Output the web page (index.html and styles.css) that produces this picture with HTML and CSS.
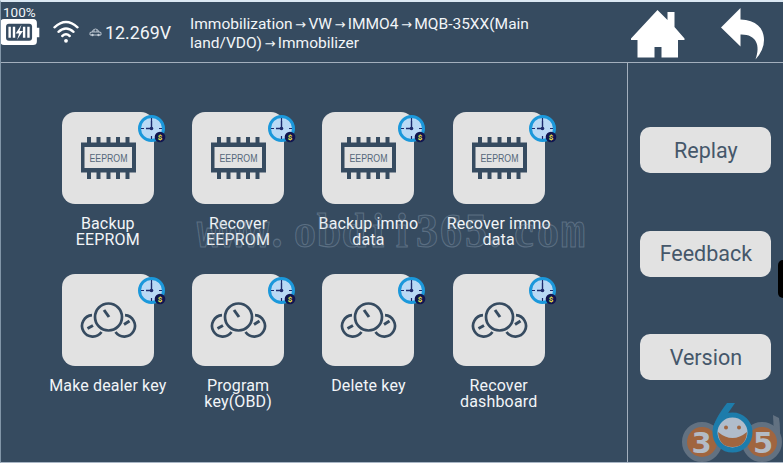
FILE: index.html
```
<!DOCTYPE html>
<html lang="en">
<head>
  <meta charset="UTF-8" />
  <meta name="viewport" content="width=device-width, initial-scale=1.0"/>
  <title>Immobilizer</title>
  <link rel="stylesheet" href="styles.css">
</head>
<body>
  <!-- shared icons -->
  <svg class="sprite" width="0" height="0">
    <symbol id="icon-eeprom" viewBox="0 0 92 92">
      <path d="M25 31v-6h4v6zM34.500 31v-6h4v6zM44.500 31v-6h4v6zM54 31v-6h4v6zM63.500 31v-6h4v6zM25 60v7h4v-7zM34.500 60v7h4v-7zM44.500 60v7h4v-7zM54 60v7h4v-7zM63.500 60v7h4v-7z" fill="#364b60"/>
      <path fill-rule="evenodd" d="M19 30.500h55v30h-55zM22.500 35v21h47.500v-21z" fill="#364b60"/>
      <text x="46.500" y="49.500" text-anchor="middle" textLength="38" lengthAdjust="spacingAndGlyphs" class="chip-text">EEPROM</text>
    </symbol>
    <symbol id="icon-gauge" viewBox="0 0 92 92">
      <g fill="none" stroke="#364b60" stroke-width="2.700">
        <circle cx="46.500" cy="43" r="13.500"/>
        <path d="M30 41.200A10.700 10.700 0 1 0 39.500 58M63 41.200A10.700 10.700 0 1 1 53.500 58"/>
        <path d="M42 36l5 7" stroke-width="3"/>
        <path d="M25.500 54.500l5.500-3M62 50.500l5.500-3.500" stroke-width="3"/>
      </g>
    </symbol>
    <symbol id="icon-clock" viewBox="0 0 28 28">
      <circle cx="13.500" cy="13.500" r="12" fill="#b9d9f5" stroke="#1b98db" stroke-width="3"/>
      <path d="M13.500 3v3M13.500 21v3M3 13.500h3M21 13.500h3" stroke="#1d2a6b" stroke-width="1.200"/>
      <path d="M13.500 6v7.500H8" fill="none" stroke="#1d2a6b" stroke-width="1.400"/>
      <circle cx="13.500" cy="13.500" r="1.800" fill="#1d2a6b"/>
      <circle cx="22" cy="22" r="5.300" fill="#10154f"/>
      <text x="22" y="25" text-anchor="middle" class="coin-text">$</text>
    </symbol>
  </svg>

  <div class="screen">
    <header class="topbar">
      <div class="battery">
        <span class="battery-level">100%</span>
        <svg width="39" height="27" viewBox="0 0 40 28">
          <path d="M3 0h30q4 0 4 4v5h2.500v10h-2.500v4q0 4-4 4h-30q-4 0-4-4v-19q0-4 4-4z" fill="#fff"/>
          <rect x="5" y="5" width="27" height="17.500" rx="3" fill="#364b60"/>
          <path d="M7.500 8h2.500v11.500h-2.500zM12 8h2.500v11.500h-2.500zM22.500 8h2.500v11.500h-2.500zM27 8h2.500v11.500h-2.500zM21 6l-6 9h3.500l-2 6.500 6-9h-3.500z" fill="#fff"/>
        </svg>
      </div>
      <svg class="wifi" width="26" height="24" viewBox="0 0 26 24">
        <g fill="none" stroke="#fff" stroke-width="2.400" stroke-linecap="round">
          <path d="M1.500 7.300Q13-3.300 24.500 7.300M5.500 11.800Q13 5 20.500 11.800M9.300 16Q13 12.700 16.700 16"/>
        </g>
        <circle cx="13" cy="20.800" r="1.900" fill="#fff"/>
      </svg>
      <svg class="car" width="13" height="9" viewBox="0 0 13 9">
        <path d="M1 7V4.500l2-.5Q4 1 6.500 1T10 4l2 .5V7z M3 4h7M5 2v2M8 2v2" fill="none" stroke="#c5ced8" stroke-width=".9"/>
        <circle cx="3.500" cy="7" r="1.200" fill="#c5ced8"/>
        <circle cx="9.500" cy="7" r="1.200" fill="#c5ced8"/>
      </svg>
      <span class="voltage">12.269V</span>
      <div class="path">Immobilization<i>→</i>VW<i>→</i>IMMO4<i>→</i>MQB-35XX(Main<br>land/VDO)<i>→</i>Immobilizer</div>
      <svg class="home" width="56" height="48" viewBox="0 0 56 48">
        <path d="M27.500 0l10 10V2h7v15L54.500 28.500v1.500h-6.500v17.500H31.500V37h-7v10.500H7.500V30H1v-1.500z" fill="#fff"/>
      </svg>
      <svg class="back" width="46" height="52" viewBox="0 0 46 52">
        <path d="M1 19.500L20.500 0v11.500C36 12 44 20 44 32q0 10-8.500 19.500C41 37 36 26 20.500 26.500V38.500z" fill="#fff"/>
      </svg>
    </header>

    <div class="content">
      <main class="grid">
        <div class="item">
          <div class="tile"><svg class="icon"><use href="#icon-eeprom"/></svg><svg class="badge"><use href="#icon-clock"/></svg></div>
          <div class="label">Backup<br>EEPROM</div>
        </div>
        <div class="item">
          <div class="tile"><svg class="icon"><use href="#icon-eeprom"/></svg><svg class="badge"><use href="#icon-clock"/></svg></div>
          <div class="label">Recover<br>EEPROM</div>
        </div>
        <div class="item">
          <div class="tile"><svg class="icon"><use href="#icon-eeprom"/></svg><svg class="badge"><use href="#icon-clock"/></svg></div>
          <div class="label">Backup immo<br>data</div>
        </div>
        <div class="item">
          <div class="tile"><svg class="icon"><use href="#icon-eeprom"/></svg><svg class="badge"><use href="#icon-clock"/></svg></div>
          <div class="label">Recover immo<br>data</div>
        </div>
        <div class="item">
          <div class="tile"><svg class="icon"><use href="#icon-gauge"/></svg><svg class="badge"><use href="#icon-clock"/></svg></div>
          <div class="label">Make dealer key</div>
        </div>
        <div class="item">
          <div class="tile"><svg class="icon"><use href="#icon-gauge"/></svg><svg class="badge"><use href="#icon-clock"/></svg></div>
          <div class="label">Program<br>key(OBD)</div>
        </div>
        <div class="item">
          <div class="tile"><svg class="icon"><use href="#icon-gauge"/></svg><svg class="badge"><use href="#icon-clock"/></svg></div>
          <div class="label">Delete key</div>
        </div>
        <div class="item">
          <div class="tile"><svg class="icon"><use href="#icon-gauge"/></svg><svg class="badge"><use href="#icon-clock"/></svg></div>
          <div class="label">Recover<br>dashboard</div>
        </div>
      </main>

      <aside class="sidebar">
        <button type="button">Replay</button>
        <button type="button">Feedback</button>
        <button type="button">Version</button>
      </aside>
    </div>

    <!-- overlays -->
    <svg class="watermark" width="400" height="60" viewBox="0 0 400 60">
      <text transform="translate(0 43) scale(1 1.120)" x="13 37 61 81 109 133 158 182 206 231 255 280 299 328 352 377" y="0"><tspan class="wide">www</tspan>.obdii365.co<tspan class="wide">m</tspan></text>
    </svg>
    <div class="handle"></div>
    <svg class="logo" width="103" height="61" viewBox="0 0 103 61">
      <path d="M93 14l6 3q2 12 0 27l-5-10z" fill="#627181"/>
      <circle cx="22" cy="41" r="17.500" fill="#a0653f" stroke="#627181" stroke-width="5"/>
      <circle cx="82" cy="41" r="17.500" fill="#a0653f" stroke="#627181" stroke-width="5"/>
      <text x="21.500" y="52" text-anchor="middle">3</text>
      <text x="83" y="52" text-anchor="middle">5</text>
      <path d="M47 2h8L44 18l-11 10q1-9 14-26z" fill="#1d7cab"/>
      <circle cx="52.500" cy="31.500" r="17.500" fill="#b0bccb" stroke="#1d7cab" stroke-width="5"/>
      <circle cx="46" cy="26.500" r="2" fill="#a0653f"/>
      <circle cx="59" cy="26.500" r="2" fill="#a0653f"/>
      <path d="M38 31q14.500 12 29 0-1 15-14.500 15T38 31z" fill="#a0653f"/>
    </svg>
  </div>
</body>
</html>
```
FILE: styles.css
```
* {
  box-sizing: border-box;
}

body {
  margin: 0;
  font-family: Roboto, sans-serif;
}

.sprite {
  display: block;
}

.screen {
  position: relative;
  width: 783px;
  height: 463px;
  overflow: hidden;
  background: #364b60;
  border-top: 2px solid #dbe8f3;
  border-left: 1px solid #8296a8;
  border-bottom: 1px solid #a9b6c5;
  color: #f2f5f8;
}

.topbar {
  display: flex;
  height: 61px;
  border-bottom: 1px solid #a3afbd;
}

.battery {
  width: 40px;
  margin-top: 3px;
}

.battery-level {
  display: block;
  height: 14px;
  padding-left: 2px;
  font-size: 13.500px;
  line-height: 14px;
}

.battery svg {
  display: block;
}

.wifi {
  margin: 18px 0 0 12px;
}

.car {
  margin: 26px 0 0 10px;
}

.voltage {
  width: 85px;
  margin: 19px 0 0 3px;
  font-size: 17.800px;
  line-height: 24px;
}

.path {
  width: 440px;
  padding-top: 13px;
  font-size: 15.500px;
  line-height: 18.500px;
  white-space: nowrap;
}

.path i {
  display: inline-block;
  width: 15.800px;
  font: 13px/1 "DejaVu Sans", sans-serif;
  text-align: center;
}

.home {
  margin-top: 8px;
}

.back {
  margin: 6px 0 0 34px;
}

.content {
  display: flex;
  height: 399px;
}

.grid {
  display: grid;
  grid-template-columns: repeat(4, 130.300px);
  grid-template-rows: 162px 162px;
  width: 627px;
  padding: 49px 0 0 41.700px;
  border-right: 1px solid #a3afbd;
}

.item {
  display: flex;
  flex-direction: column;
  align-items: center;
}

.tile {
  position: relative;
  width: 92px;
  height: 92px;
  background: #e2e2e2;
  border-radius: 13px;
}

.icon {
  display: block;
  width: 92px;
  height: 92px;
}

.badge {
  position: absolute;
  top: 3px;
  right: -12px;
  width: 28px;
  height: 28px;
}

.chip-text {
  font: 10.500px "Liberation Sans", sans-serif;
  fill: #55677a;
}

.coin-text {
  font: bold 8px Roboto, sans-serif;
  fill: #f0e54a;
}

.label {
  margin-top: 12px;
  font-size: 16px;
  letter-spacing: 0.150px;
  line-height: 15.500px;
  text-align: center;
  white-space: nowrap;
}

.sidebar {
  display: flex;
  flex: 1;
  flex-direction: column;
  align-items: flex-start;
  gap: 57.500px;
  padding: 64px 0 0 12.400px;
}

.sidebar button {
  width: 131px;
  height: 46px;
  border: none;
  border-radius: 10px;
  background: #e2e2e2;
  color: #45576a;
  font: 21.500px Roboto, sans-serif;
}

.watermark {
  position: absolute;
  top: 202px;
  left: 195px;
}

.watermark text {
  font: bold 44px "Liberation Serif", serif;
  text-anchor: middle;
  fill: rgba(120, 140, 160, 0.08);
  stroke: rgba(160, 178, 195, 0.35);
  stroke-width: 1;
}

.watermark .wide {
  font: bold 41px "Liberation Mono", monospace;
}

.handle {
  position: absolute;
  top: 258px;
  right: 0;
  width: 5px;
  height: 38px;
  border-radius: 5px 0 0 5px;
  background: #000;
}

.logo {
  position: absolute;
  right: 0;
  bottom: 0;
}

.logo text {
  font: bold 29px "DejaVu Sans", sans-serif;
  fill: #b3bbc6;
}
```
